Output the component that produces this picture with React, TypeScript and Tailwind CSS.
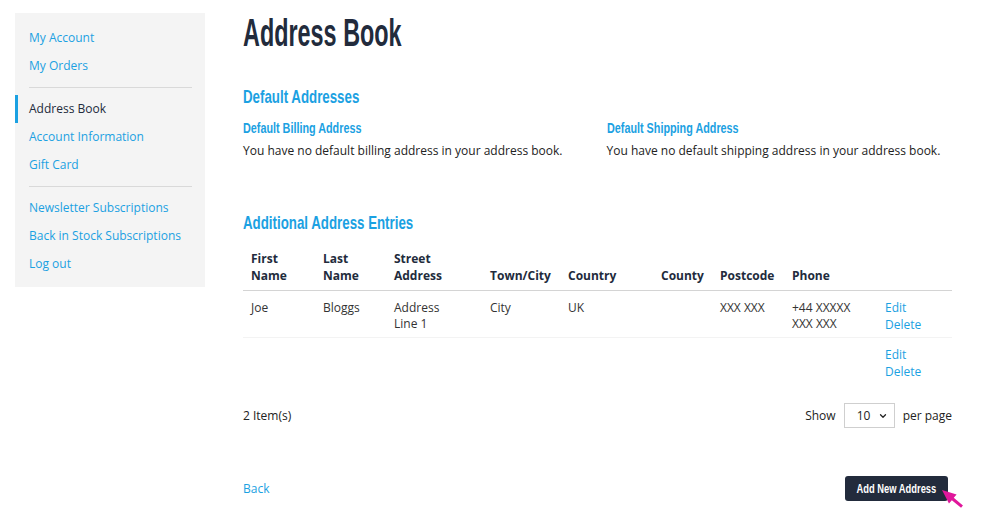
import { ChevronDown } from 'lucide-react';

// condensed display face: bold sans squeezed horizontally
const heading = "font-['Liberation_Sans',sans-serif] font-bold inline-block origin-left whitespace-nowrap";

const navTop = ['My Account', 'My Orders'];
const navMid = ['Address Book', 'Account Information', 'Gift Card'];
const navBottom = ['Newsletter Subscriptions', 'Back in Stock Subscriptions', 'Log out'];

const columns = [
  { label: ['First', 'Name'], width: 72 },
  { label: ['Last', 'Name'], width: 71 },
  { label: ['Street', 'Address'], width: 96 },
  { label: ['Town/City'], width: 78 },
  { label: ['Country'], width: 93 },
  { label: ['County'], width: 59 },
  { label: ['Postcode'], width: 72 },
  { label: ['Phone'], width: 93 },
  { label: [], width: 75 },
];

const rows: string[][][] = [
  [['Joe'], ['Bloggs'], ['Address', 'Line 1'], ['City'], ['UK'], [], ['XXX XXX'], ['+44 XXXXX', 'XXX XXX']],
  [[], [], [], [], [], [], [], []],
];

const NavItem = ({ label }: { label: string }) => {
  const active = label === 'Address Book';
  return (
    <a
      href="#"
      className={
        active
          ? 'block h-[28px] leading-[28px] pl-[11px] border-l-[3px] border-[#1ba1e2] text-[#222b3c]'
          : 'block h-[28px] leading-[28px] pl-[14px] text-[#1ba1e2]'
      }
    >
      {label}
    </a>
  );
};

const Divider = () => (
  <div className="py-[7px] pl-[14px] pr-[13px]">
    <div className="h-px bg-[#d9d9d9]" />
  </div>
);

export default function App() {
  return (
    <div className="min-h-[526px] bg-white font-['Open_Sans',sans-serif] text-[12px] text-[#333]">
      <div className="flex items-start pl-[15px]">
        <aside className="mt-[13px] w-[190px] shrink-0 bg-[#f4f4f4] pt-[11px] pb-[9px]">
          {navTop.map((l) => (
            <NavItem key={l} label={l} />
          ))}
          <Divider />
          {navMid.map((l) => (
            <NavItem key={l} label={l} />
          ))}
          <Divider />
          {navBottom.map((l) => (
            <NavItem key={l} label={l} />
          ))}
        </aside>

        <main className="ml-[38px] w-[709px]">
          <h1 className="mt-[9px] h-[44px] text-[39px] leading-[44px] text-[#222b3c]">
            <span className={`${heading} scale-x-[0.6]`}>Address Book</span>
          </h1>

          <h2 className="mt-[29px] h-[28px] text-[19px] leading-[28px] text-[#1ba1e2]">
            <span className={`${heading} scale-x-[0.7]`}>Default Addresses</span>
          </h2>
          <div className="grid grid-cols-2">
            <div>
              <h3 className="mt-[6px] h-[22px] text-[15px] leading-[22px] text-[#1ba1e2]">
                <span className={`${heading} scale-x-[0.72]`}>Default Billing Address</span>
              </h3>
              <p className="mt-[3px] leading-[20px] text-[#222]">
                You have no default billing address in your address book.
              </p>
            </div>
            <div className="pl-[9px]">
              <h3 className="mt-[6px] h-[22px] text-[15px] leading-[22px] text-[#1ba1e2]">
                <span className={`${heading} scale-x-[0.72]`}>Default Shipping Address</span>
              </h3>
              <p className="mt-[3px] leading-[20px] text-[#222]">
                You have no default shipping address in your address book.
              </p>
            </div>
          </div>

          <h2 className="mt-[47px] h-[28px] text-[19px] leading-[28px] text-[#1ba1e2]">
            <span className={`${heading} scale-x-[0.7]`}>Additional Address Entries</span>
          </h2>

          <table className="mt-[6px] w-[709px] table-fixed border-collapse text-left">
            <colgroup>
              {columns.map((c, i) => (
                <col key={i} style={{ width: c.width }} />
              ))}
            </colgroup>
            <thead>
              <tr className="border-b border-[#d4d4d4]">
                {columns.map((c, i) => (
                  <th key={i} className="px-[8px] pt-[8px] pb-[6px] align-bottom font-bold leading-[17px] text-[#222b3c]">
                    {c.label.map((line) => (
                      <div key={line}>{line}</div>
                    ))}
                  </th>
                ))}
              </tr>
            </thead>
            <tbody>
              {rows.map((r, ri) => (
                <tr key={ri} className={ri === 0 ? 'border-b border-[#f3f3f3]' : ''}>
                  {r.map((cell, ci) => (
                    <td key={ci} className="px-[8px] pt-[9px] pb-[3px] align-top leading-[16px]">
                      {cell.map((line) => (
                        <div key={line}>{line}</div>
                      ))}
                    </td>
                  ))}
                  <td className="px-[8px] pt-[8px] pb-[4px] align-top leading-[17px] text-[#1ba1e2]">
                    <a href="#" className="block">Edit</a>
                    <a href="#" className="block">Delete</a>
                  </td>
                </tr>
              ))}
            </tbody>
          </table>

          <div className="mt-[19px] flex items-center justify-between">
            <span className="leading-[20px] text-[#222]">2 Item(s)</span>
            <div className="flex items-center gap-[8px] text-[#222]">
              <span>Show</span>
              <div className="flex h-[25px] w-[51px] items-center justify-between border border-[#cfcfcf] pl-[12px] pr-[6px]">
                <span>10</span>
                <ChevronDown size={10} strokeWidth={3} />
              </div>
              <span>per page</span>
            </div>
          </div>

          <div className="mt-[48px] flex items-center justify-between">
            <a href="#" className="leading-[20px] text-[#1ba1e2]">Back</a>
            <div className="relative mr-[4px] flex">
              <button className="flex h-[25px] w-[103px] items-center justify-center overflow-hidden rounded-[3px] bg-[#222b3c] text-[13px] text-white">
                <span className="inline-block whitespace-nowrap font-['Liberation_Sans',sans-serif] font-bold scale-x-[0.72]">
                  Add New Address
                </span>
              </button>
              {/* mouse pointer */}
              <svg className="absolute left-[95px] top-[12px]" width="26" height="24" viewBox="0 0 26 24">
                <path d="M2 2 L16.6 6.4 L13.76 9.85 L22.96 17.4 L21.04 19.8 L11.84 12.16 L8.96 15.6 Z" fill="#e0179b" />
              </svg>
            </div>
          </div>
        </main>
      </div>
    </div>
  );
}
